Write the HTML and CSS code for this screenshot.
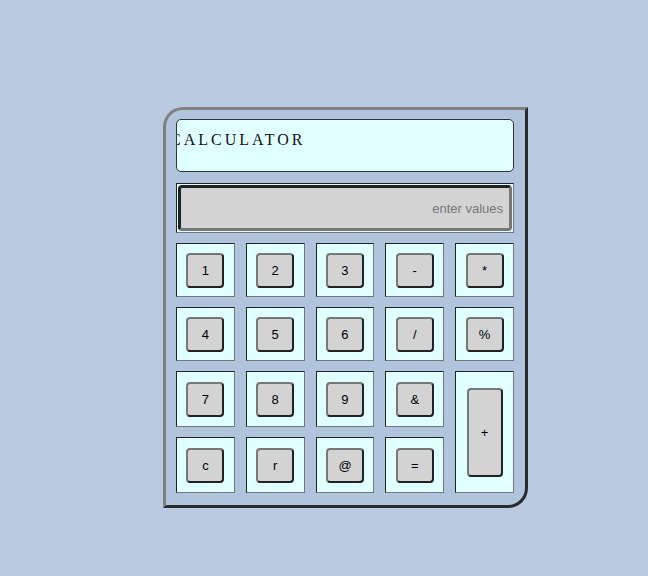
FILE: index.html
```html
<!DOCTYPE html>
<html>
<head>
<meta charset="utf-8">
<link rel="stylesheet" href="styles.css">
</head>
<body>
<div class="calc">
  <div class="title"><span class="title-text">Calculator</span></div>
  <div class="display"><input class="screen" type="text" placeholder="enter values"></div>
  <div class="keys">
    <div class="cell"><button class="key">1</button></div>
    <div class="cell"><button class="key">2</button></div>
    <div class="cell"><button class="key">3</button></div>
    <div class="cell"><button class="key">-</button></div>
    <div class="cell"><button class="key">*</button></div>
    <div class="cell"><button class="key">4</button></div>
    <div class="cell"><button class="key">5</button></div>
    <div class="cell"><button class="key">6</button></div>
    <div class="cell"><button class="key">/</button></div>
    <div class="cell"><button class="key">%</button></div>
    <div class="cell"><button class="key">7</button></div>
    <div class="cell"><button class="key">8</button></div>
    <div class="cell"><button class="key">9</button></div>
    <div class="cell"><button class="key">&amp;</button></div>
    <div class="cell cell-tall"><button class="key key-tall">+</button></div>
    <div class="cell"><button class="key">c</button></div>
    <div class="cell"><button class="key">r</button></div>
    <div class="cell"><button class="key">@</button></div>
    <div class="cell"><button class="key">=</button></div>
  </div>
</div>
</body>
</html>
```
FILE: styles.css
```css
html, body {
  margin: 0;
  padding: 0;
}
body {
  background: #b8c9e0;
  width: 648px;
  height: 576px;
  overflow: hidden;
}
.calc {
  box-sizing: border-box;
  margin: 107px 0 0 163px;
  width: 365px;
  height: 401px;
  background: #b0c4de;
  border: 3px solid;
  border-color: #808080 #2a2a2a #2a2a2a #808080;
  border-radius: 20px 0 20px 0;
  padding: 9px 11px 11px 10px;
  display: flex;
  flex-direction: column;
}
.title {
  box-sizing: border-box;
  height: 53px;
  background: #e0ffff;
  border: 1px solid #333;
  border-radius: 5px;
  overflow: hidden;
  padding-top: 12px;
}
.title-text {
  display: block;
  margin-left: -7px;
  font-family: "Liberation Serif", serif;
  font-size: 16px;
  line-height: 16px;
  text-transform: uppercase;
  letter-spacing: 3px;
  color: #111;
  white-space: nowrap;
}
.display {
  box-sizing: border-box;
  margin-top: 11px;
  height: 50px;
  background: #e0ffff;
  border: 1px solid;
  border-color: #222 #777 #777 #222;
  padding: 1px;
  display: flex;
}
.screen {
  box-sizing: border-box;
  flex: 1;
  width: 100%;
  height: 46px;
  margin: 0;
  background: #d3d3d3;
  border: 3px solid;
  border-color: #222 #777 #777 #222;
  border-radius: 4px;
  padding: 0 6px 0 6px;
  text-align: right;
  font-family: "Liberation Sans", Arial, sans-serif;
  font-size: 13px;
  color: #000;
  outline: none;
}
.screen::placeholder {
  color: #777;
  opacity: 1;
}
.keys {
  margin-top: 10px;
  display: grid;
  grid-template-columns: repeat(5, 1fr);
  grid-template-rows: 54px 54px 56px 56px;
  column-gap: 11px;
  row-gap: 10px;
}
.cell {
  box-sizing: border-box;
  background: #e0ffff;
  border: 1px solid;
  border-color: #222 #777 #777 #222;
  display: flex;
  align-items: center;
  justify-content: center;
}
.cell-tall {
  grid-column: 5;
  grid-row: 3 / span 2;
}
.key {
  box-sizing: border-box;
  width: 38px;
  height: 35px;
  margin: 0;
  padding: 0;
  background: #d3d3d3;
  border: 2px solid;
  border-color: #777 #222 #222 #777;
  border-radius: 4px;
  font-family: "Liberation Sans", Arial, sans-serif;
  font-size: 13px;
  color: #000;
  display: flex;
  align-items: center;
  justify-content: center;
}
.key-tall {
  width: 36px;
  height: 89px;
}
```
